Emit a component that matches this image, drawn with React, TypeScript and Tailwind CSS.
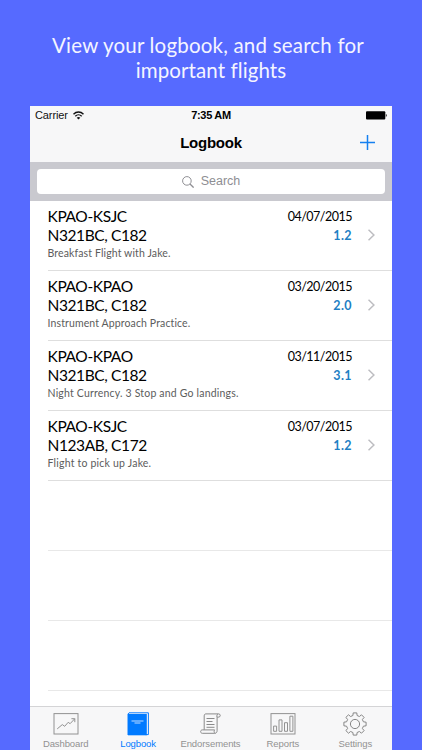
import React from "react";

interface Flight {
  route: string;
  aircraft: string;
  note: string;
  date: string;
  hours: string;
  noteSpacing: string;
}

const flights: Flight[] = [
  { route: "KPAO-KSJC", aircraft: "N321BC, C182", note: "Breakfast Flight with Jake.", date: "04/07/2015", hours: "1.2", noteSpacing: "tracking-[0.12px]" },
  { route: "KPAO-KPAO", aircraft: "N321BC, C182", note: "Instrument Approach Practice.", date: "03/20/2015", hours: "2.0", noteSpacing: "tracking-[0.12px]" },
  { route: "KPAO-KPAO", aircraft: "N321BC, C182", note: "Night Currency. 3 Stop and Go landings.", date: "03/11/2015", hours: "3.1", noteSpacing: "tracking-[0.19px]" },
  { route: "KPAO-KSJC", aircraft: "N123AB, C172", note: "Flight to pick up Jake.", date: "03/07/2015", hours: "1.2", noteSpacing: "tracking-[0.21px]" },
];

function Wifi() {
  return (
    <svg width="11" height="9" viewBox="0 0 11 9" fill="none" stroke="#111" strokeWidth="1.4">
      <path d="M.5 3.200C3.400.3 7.600.3 10.500 3.200" />
      <path d="M2.300 5.200c1.800-1.800 4.600-1.800 6.400 0" />
      <path d="M5.500 8.600 3.700 6.700c1-.9 2.600-.9 3.600 0z" fill="#111" stroke="none" />
    </svg>
  );
}

function Battery() {
  return (
    <svg width="21" height="9" viewBox="0 0 21 9">
      <rect x="0" y="0.200" width="19.300" height="8.400" rx="1" fill="#000" />
      <path d="M19.900 3c1.100.4 1.100 2.500 0 2.900z" fill="#000" />
    </svg>
  );
}

function DashboardIcon() {
  return (
    <svg width="26" height="24" viewBox="0 0 26 24" fill="none" stroke="#929292">
      <rect x="1" y="1.600" width="24" height="20.400" />
      <path d="M4.200 16.900 9.300 12.600l2.400 1.700 3.500-4 1.900 1.400 4.600-4.900M18.400 6.700h3.400v3.500" />
    </svg>
  );
}

function LogbookIcon() {
  return (
    <svg className="relative right-[0.5px]" width="26" height="24" viewBox="0 0 26 24" fill="none">
      <path d="M4 .8h19.400v21.800H20.300" stroke="#0a7cff" />
      <path d="M4 .8 3 2v21" stroke="#0a7cff" />
      <rect x="3" y="2" width="18.800" height="21.300" fill="#007aff" />
      <path d="M6.500 9h12M9.500 11h6" stroke="#d5e8ff" strokeWidth=".9" />
    </svg>
  );
}

function EndorsementsIcon() {
  return (
    <svg width="26" height="24" viewBox="0 0 26 24" fill="none" stroke="#8a8a8a">
      <path d="M6.200 17.800V3.900c0-1.300.6-2 1.800-2H20.800c1.900 0 1.900 3.200 0 3.200h-1.700V18.500" />
      <path d="M18.900 5.100c-.2-1.400.1-2.600 1.100-3.200" />
      <path d="M16.700 17.900H4.300c-2.200 0-2.200 3.400 0 3.400h12.500c1.600 0 2.300-1.200 2.300-2.800M16.700 17.900c-.8 1-.8 2.500.3 3.400" />
      <path d="M8.500 6.500h8M8.500 9.500h6M8.500 12.500h8M8.500 15.300h8" />
    </svg>
  );
}

function ReportsIcon() {
  return (
    <svg width="26" height="24" viewBox="0 0 26 24" fill="none" stroke="#929292">
      <rect x="1" y="1.600" width="24" height="20.400" />
      <path d="M3.600 19.300v-5.200h3v5.200zM9 19.300V7.900h3v11.400zM14.500 19.300v-8.600h3v8.600zM19.900 19.300V4.200h3v15.100z" />
    </svg>
  );
}

function SettingsIcon() {
  return (
    <svg className="relative right-[0.5px]" width="26" height="24" viewBox="0 0 26 24" fill="none" stroke="#868686" strokeLinejoin="round">
      <path d="M10.900 3.500 11.200.9h3.600l.3 2.600 2.300 1L19.500 2.800l2.600 2.600-1.700 2.100 1 2.300 2.700.4v3.600l-2.700.4-1 2.300 1.700 2.100-2.600 2.600-2.100-1.700-2.300 1-.3 2.600h-3.600l-.3-2.600-2.300-1-2.100 1.700-2.600-2.600 1.700-2.100-1-2.300-2.700-.4v-3.600l2.700-.4 1-2.300-1.700-2.100L6.500 2.800l2.100 1.700z" />
      <circle cx="13" cy="12" r="4.600" />
    </svg>
  );
}

const tabs = [
  { label: "Dashboard", Icon: DashboardIcon, active: false },
  { label: "Logbook", Icon: LogbookIcon, active: true },
  { label: "Endorsements", Icon: EndorsementsIcon, active: false },
  { label: "Reports", Icon: ReportsIcon, active: false },
  { label: "Settings", Icon: SettingsIcon, active: false },
];

function FlightRow({ flight }: { flight: Flight }) {
  return (
    <li className="ml-[17.500px] flex h-[70px] justify-between border-b border-[#dedede] pt-[6px] pr-[16px]">
      <div className="whitespace-nowrap">
        <div className="text-[15.500px] leading-[18.500px] tracking-[-0.38px] text-black">{flight.route}</div>
        <div className="text-[15.500px] leading-[18.500px] tracking-[-0.4px] text-black">{flight.aircraft}</div>
        <div className={`text-[10.500px] leading-[18px] text-[#5c5c5c] ${flight.noteSpacing}`}>{flight.note}</div>
      </div>
      <div className="flex">
        <div className="text-right">
          <div className="text-[12.500px] leading-[19px] tracking-[-0.5px] text-black">{flight.date}</div>
          <div className="text-[12.500px] leading-[19px] font-bold tracking-[0.4px] text-[#1f7fc4]">{flight.hours}</div>
        </div>
        <svg className="mt-[22px] ml-[16px]" width="8" height="12" viewBox="0 0 8 12" fill="none" stroke="#bdbdc1" strokeWidth="1.500">
          <path d="M.5 .8 5.900 6 .5 11.200" />
        </svg>
      </div>
    </li>
  );
}

export default function App() {
  return (
    <div className="flex h-[750px] w-[422px] flex-col overflow-hidden bg-[#566aff] font-['Lato',sans-serif]">
      <h1 className="h-[106px] shrink-0 pt-[33px] text-center text-[20.500px] leading-[25px] font-normal text-[#f4f5ff]">
        <span className="block pr-[6px] tracking-[0.2px]">View your logbook, and search for</span>
        <span className="block tracking-[0.1px]">important flights</span>
      </h1>
      <main className="ml-[30px] flex h-[644px] w-[362px] flex-col bg-white">
        <header className="h-[56px] shrink-0 bg-[#f7f7f8] font-['Liberation_Sans',sans-serif]">
          <div className="grid h-[19px] grid-cols-3 items-center pr-[5px] pl-[5px] text-[11px]">
            <div className="flex items-center gap-[5px] text-[#111]">
              <span className="tracking-[-0.1px]">Carrier</span>
              <Wifi />
            </div>
            <div className="text-center font-bold tracking-[-0.3px] text-black">7:35 AM</div>
            <div className="flex justify-end"><Battery /></div>
          </div>
          <div className="grid h-[37px] grid-cols-3 items-center pr-[17px] pl-[17px]">
            <span />
            <h2 className="text-center text-[15px] font-bold tracking-[-0.25px] text-black">Logbook</h2>
            <svg className="mb-[3px] justify-self-end" width="15" height="15" viewBox="0 0 15 15" stroke="#1580f0" strokeWidth="1.500">
              <path d="M0 7.500h15M7.500 0v15" />
            </svg>
          </div>
        </header>
        <div className="h-[39px] shrink-0 bg-[#c9c9cf] px-[7px] pt-[7px]">
          <div className="flex h-[25px] items-center justify-center gap-[7px] rounded-[4px] bg-white font-['Liberation_Sans',sans-serif] text-[12.500px] text-[#8e8e93]">
            <svg width="12" height="12" viewBox="0 0 12 12" fill="none" stroke="#8e8e93">
              <circle cx="4.900" cy="4.900" r="4.300" />
              <path d="m8 8 3.600 3.600" strokeWidth="1.300" />
            </svg>
            Search
          </div>
        </div>
        <ul className="flex-1">
          {flights.map((flight) => <FlightRow key={flight.date} flight={flight} />)}
          <li className="ml-[17.500px] h-[70px] border-b border-[#e8e8e8]" />
          <li className="ml-[17.500px] h-[70px] border-b border-[#e8e8e8]" />
          <li className="ml-[17.500px] h-[70px] border-b border-[#e8e8e8]" />
        </ul>
        <nav className="grid h-[44px] shrink-0 grid-cols-5 border-t border-[#d4d4d6] bg-[#f7f7f8] pt-[5px] font-['Liberation_Sans',sans-serif]">
          {tabs.map(({ label, Icon, active }) => (
            <div key={label} className={`flex flex-col items-center text-[9.500px] leading-[15px] tracking-[-0.1px] ${active ? "text-[#007aff]" : "text-[#929292]"}`}>
              <Icon />
              <span className="pr-[1px]">{label}</span>
            </div>
          ))}
        </nav>
      </main>
    </div>
  );
}
